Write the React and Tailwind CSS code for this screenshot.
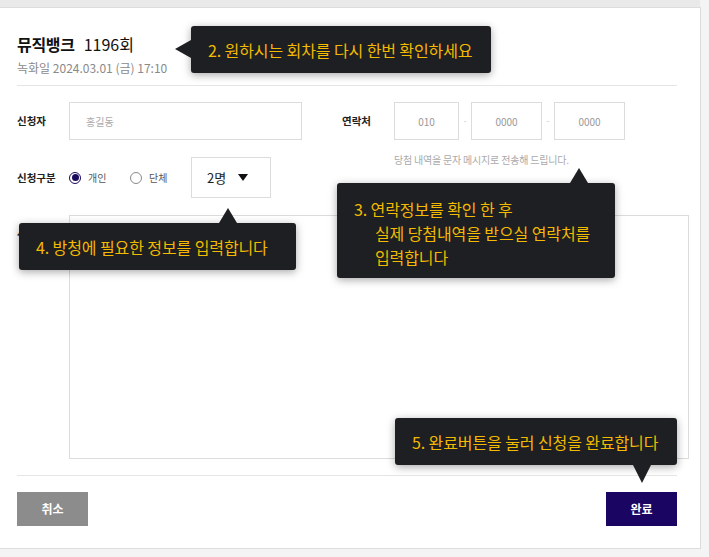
const font = { fontFamily: '"Noto Sans CJK KR", "Noto Sans", sans-serif' };

const Radio = ({ checked, label }) => (
  <label className="flex items-center gap-[7px]">
    <span
      className={
        checked
          ? "w-[12px] h-[12px] rounded-full border border-[#1a0a5e] flex items-center justify-center"
          : "w-[12px] h-[12px] rounded-full border border-[#8a8a8a]"
      }
    >
      {checked && <span className="w-[7px] h-[7px] rounded-full bg-[#1a0a5e]" />}
    </span>
    <span className="text-[10px] text-[#555]">{label}</span>
  </label>
);

const Tip = ({ className, children }) => (
  <div
    className={
      "absolute bg-[#1e1f22] rounded-[3px] shadow-[0_2px_8px_rgba(0,0,0,0.35)] text-[16px] text-[#f4ba00] tracking-[-0.1px] " +
      className
    }
  >
    {children}
  </div>
);

export default function App() {
  return (
    <div className="relative w-[709px] h-[557px] bg-[#f4f4f4] overflow-hidden" style={font}>
      <div className="h-[7px] w-[700px] bg-[#e9e9e9]" />
      <div className="w-[701px] h-[542px] bg-white border border-l-0 border-[#dcdcdc] pl-[17px] pt-[24px]">
        <div className="h-[24px] leading-[24px] flex items-center gap-[9px] text-[#111]">
          <span className="text-[16px] font-bold tracking-[-0.3px]">뮤직뱅크</span>
          <span className="text-[16px] tracking-[0px]">1196회</span>
        </div>
        <div className="mt-[4px] h-[16px] leading-[16px] text-[12px] text-[#8a8a8a]">녹화일 2024.03.01 (금) 17:10</div>
        <div className="mt-[9px] w-[660px] h-px bg-[#e5e5e5]" />

        <div className="mt-[16px] flex">
          <div className="w-[325px]">
            <div className="flex items-center h-[38px]">
              <span className="w-[52px] text-[10.5px] font-bold text-[#222]">신청자</span>
              <div className="w-[233px] h-[38px] border border-[#dcdcdc] flex items-center pl-[16px] text-[10px] text-[#aaa]">
                홍길동
              </div>
            </div>
            <div className="mt-[17px] flex items-center h-[41px]">
              <span className="w-[52px] text-[10.5px] font-bold text-[#222]">신청구분</span>
              <div className="w-[61px]">
                <Radio checked label="개인" />
              </div>
              <div className="w-[61px]">
                <Radio label="단체" />
              </div>
              <div className="w-[80px] h-[41px] border border-[#dcdcdc] flex items-center pl-[15px] gap-[12px]">
                <span className="text-[13px] text-[#222]">2명</span>
                <span className="w-0 h-0 border-l-[5.5px] border-r-[5.5px] border-t-[7px] border-l-transparent border-r-transparent border-t-[#111]" />
              </div>
            </div>
          </div>
          <div>
            <div className="flex items-center h-[38px]">
              <span className="w-[52px] text-[10.5px] font-bold text-[#222]">연락처</span>
              <div className="w-[65px] h-[38px] border border-[#dcdcdc] flex items-center justify-center text-[10px] text-[#999]">010</div>
              <span className="w-[12px] text-center text-[9px] text-[#ccc]">-</span>
              <div className="w-[71px] h-[38px] border border-[#dcdcdc] flex items-center justify-center text-[10px] text-[#999]">0000</div>
              <span className="w-[12px] text-center text-[9px] text-[#ccc]">-</span>
              <div className="w-[71px] h-[38px] border border-[#dcdcdc] flex items-center justify-center text-[10px] text-[#999]">0000</div>
            </div>
            <div className="mt-[13px] ml-[52px] h-[14px] leading-[14px] text-[10px] text-[#aaa] tracking-[-0.2px]">
              당첨 내역을 문자 메시지로 전송해 드립니다.
            </div>
          </div>
        </div>

        <div className="mt-[17px] flex">
          <span className="w-[52px] pt-[10px] text-[10.5px] font-bold text-[#222]">사연</span>
          <div className="w-[620px] h-[244px] border border-[#dcdcdc]" />
        </div>
        <div className="mt-[16px] w-[660px] h-px bg-[#e5e5e5]" />
        <div className="mt-[16px] w-[660px] flex justify-between">
          <button className="w-[71px] h-[34px] bg-[#8c8c8c] text-white text-[12px] font-bold">취소</button>
          <button className="w-[71px] h-[34px] bg-[#1a0563] text-white text-[12px] font-bold">완료</button>
        </div>
      </div>

      <Tip className="left-[191px] top-[26px] w-[300px] h-[47px] flex items-center pl-[17px]">
        <span className="absolute left-[-16px] top-[14px] w-0 h-0 border-t-[9px] border-b-[9px] border-r-[16px] border-t-transparent border-b-transparent border-r-[#1e1f22]" />
        2. 원하시는 회차를 다시 한번 확인하세요
      </Tip>

      <Tip className="left-[337px] top-[183px] w-[278px] h-[95px] pt-[14px] pl-[17px] leading-[24px]">
        <span className="absolute left-[233px] top-[-15px] w-0 h-0 border-l-[9px] border-r-[9px] border-b-[15px] border-l-transparent border-r-transparent border-b-[#1e1f22]" />
        <div>3. 연락정보를 확인 한 후</div>
        <div className="pl-[21px]">실제 당첨내역을 받으실 연락처를</div>
        <div className="pl-[21px]">입력합니다</div>
      </Tip>

      <Tip className="left-[19px] top-[223px] w-[277px] h-[47px] flex items-center pl-[17px]">
        <span className="absolute left-[200px] top-[-15px] w-0 h-0 border-l-[9px] border-r-[9px] border-b-[15px] border-l-transparent border-r-transparent border-b-[#1e1f22]" />
        4. 방청에 필요한 정보를 입력합니다
      </Tip>

      <Tip className="left-[395px] top-[418px] w-[282px] h-[47px] flex items-center pl-[17px]">
        <span className="absolute left-[238px] bottom-[-18px] w-0 h-0 border-l-[9px] border-r-[9px] border-t-[18px] border-l-transparent border-r-transparent border-t-[#1e1f22]" />
        5. 완료버튼을 눌러 신청을 완료합니다
      </Tip>
    </div>
  );
}
